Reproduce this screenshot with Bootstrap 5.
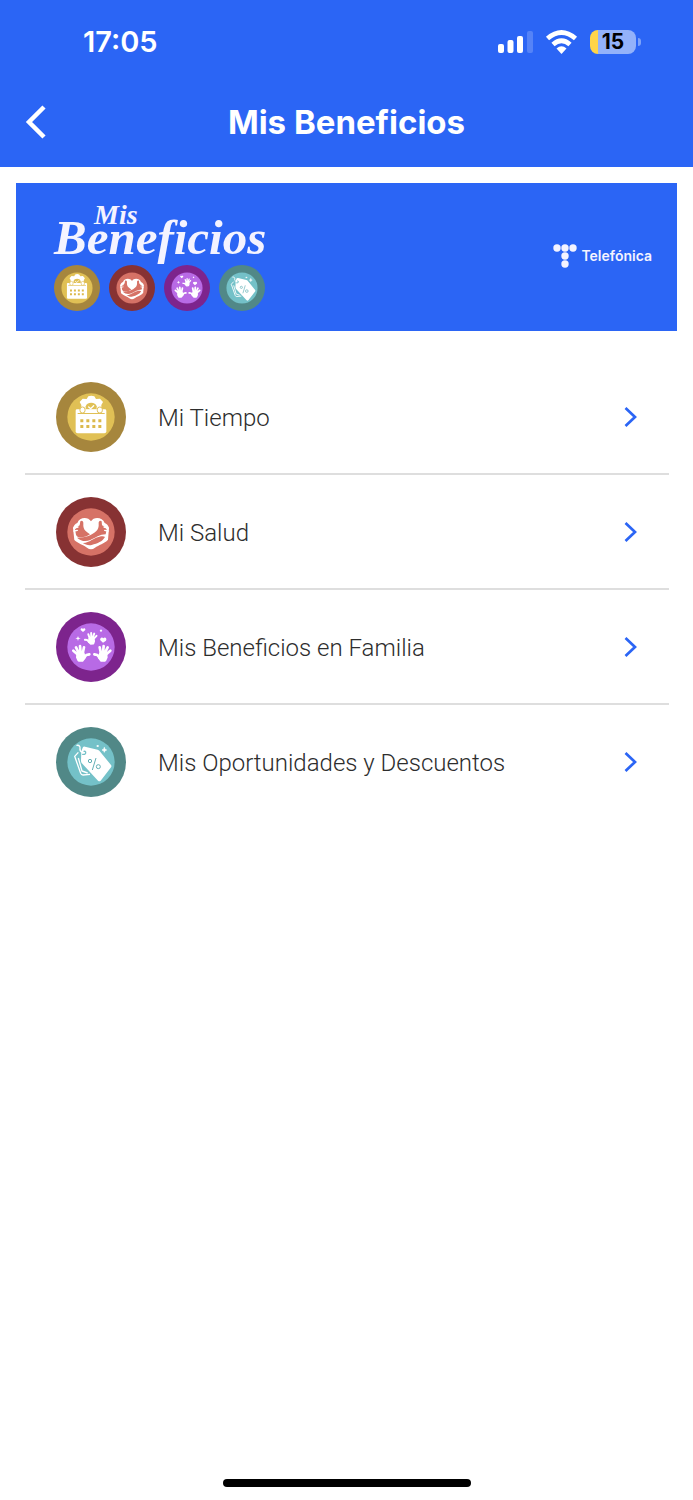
<!DOCTYPE html>
<html lang="es">
<head>
<meta charset="utf-8">
<meta name="viewport" content="width=device-width, initial-scale=1">
<title>Mis Beneficios</title>
<link href="https://cdn.jsdelivr.net/npm/bootstrap@5.3.0/dist/css/bootstrap.min.css" rel="stylesheet">
<style>
  :root { --brand: #2b65f5; }
  body { font-family: Inter, "Liberation Sans", sans-serif; }
  svg { display: block; flex: none; }
  .app-header { background: var(--brand); color: #fff; }
  .status-bar { height: 83px; padding: 0 52px 0 83px; }
  .clock { font-size: 29px; font-weight: 600; line-height: 36px; }
  .battery { width: 46px; height: 24px; border-radius: 8px; color: #000; font-size: 21px; font-weight: 700; line-height: 24px;
    background: linear-gradient(to right, #ffd549 8px, #93b2fa 8px); }
  .battery-tip { width: 3px; height: 8px; border-radius: 0 4px 4px 0; background: #7ea3f9; margin-left: 2px; }
  .title-bar { height: 84px; padding: 0 24px 7px; }
  .title-bar h1 { font-size: 33px; font-weight: 700; line-height: 40px; }
  .side-slot { width: 24px; }
  .banner { background: var(--brand); color: #f4f3ff; margin: 16px 16px 0; padding: 18px 25px 20px 38px; min-height: 148px; }
  .wordmark { font-family: "Liberation Serif", serif; font-style: italic; font-weight: 700; padding-bottom: 11px; }
  .wordmark-top { font-size: 28px; line-height: 28px; padding-left: 40px; }
  .wordmark-main { font-size: 49px; line-height: 32px; margin-top: -7px; }
  .mini-icons { gap: 9px; }
  .telefonica { font-size: 14px; font-weight: 600; line-height: 20px; gap: 4px; }
  .benefits { margin: 29px 24px 0 25px; }
  .benefit { height: 115px; padding: 0 32px 0 31px; gap: 32px; border: 0 solid #dedede; border-bottom-width: 2px;
    color: #2d2d2d; font-family: Roboto, "Open Sans", sans-serif; font-size: 24px; font-weight: 300; }
  .benefit span { padding-top: 2px; }
  .benefit:last-child { border-bottom-color: transparent; }
  .home-bar { width: 248px; height: 8px; border-radius: 4px; background: #000; margin-bottom: 13px; }
</style>
</head>
<body class="bg-white d-flex flex-column min-vh-100">

<svg width="0" height="0" class="position-absolute" aria-hidden="true">
  <symbol id="ic-tiempo" viewBox="17 15 210 210">
    <circle cx="122" cy="120" r="105" fill="#a6863d"/>
    <circle cx="122" cy="120" r="71" fill="#e0c055"/>
    <path fill="#fff" d="M93 99V84l-5-9 9-10 12 1 5-8 9-2 9 2 5 8 12-1 9 10-5 9v15z"/>
    <path fill="#e0c055" d="M106 98V88a17 14 0 0 1 33 0v10z"/>
    <path fill="none" stroke="#fff" stroke-width="4" stroke-linecap="round" d="M115 90l6 5 9-9"/>
    <path fill="#fff" d="M76 101q0-4 4-4h83q5 0 5 4v62q0 6-6 6H82q-6 0-6-6z"/>
    <path fill="#e0c055" d="M82 108h81v3H82z"/>
    <g fill="#fff" stroke="#e0c055" stroke-width="3"><rect x="89" y="90" width="15" height="18" rx="7"/><rect x="141" y="90" width="15" height="18" rx="7"/></g>
    <path fill="#dcb94b" d="M90 127h9v9h-9zM108 127h9v9h-9zM126 127h9v9h-9zM144 127h9v9h-9zM90 144h9v9h-9zM108 144h9v9h-9zM126 144h9v9h-9zM144 144h9v9h-9z"/>
  </symbol>
  <symbol id="ic-salud" viewBox="17 15 210 210">
    <circle cx="122" cy="120" r="105" fill="#873233"/>
    <circle cx="122" cy="120" r="71" fill="#d67266"/>
    <path fill="#fff" d="M122 88c-9-15-35-13-41 5-7 2-11 9-13 15l4 36c11 11 28 15 38 23 8 6 16 6 24 0 11-8 28-12 39-24l3-35c-2-8-7-13-13-15-6-18-33-20-41-5z"/>
    <path fill="#d67266" d="M90 88c5-5 10 0 9 7-1 10 2 17 7 22 4 4 9 7 13 10-10 7-22 10-36 8-3-2-5-4-6-7l-3-16 9-9 5-3z"/>
    <path fill="#d67266" d="M154 88c-5-5-10 0-9 7 1 10-2 17-7 22-13 13-32 20-58 20 13 12 27 12 40 7 15-6 29-17 46-17l3-15-8-9-6-3z"/>
    <path fill="#d67266" d="M97 153c18 2 32-16 55-20 6-1 10 0 12 2-8 14-22 19-40 24-10 3-19-2-27-6z"/>
    <path fill="none" stroke="#fff" stroke-width="4" stroke-linecap="round" d="M71 108l12-3M71 117l10-2M173 108l-12-3M173 117l-10-2"/>
  </symbol>
  <symbol id="ic-familia" viewBox="17 15 210 210">
    <circle cx="122" cy="120" r="105" fill="#7d248d"/>
    <circle cx="122" cy="120" r="71" fill="#b86ae5"/>
    <g id="hand" fill="none" stroke="#fff" stroke-width="8" stroke-linecap="round" stroke-linejoin="round">
      <path d="M83 143l-14-12M86 139l-9-18M91 138l-2-21M97 140l4-19M101 153l7-9 9-2"/>
      <path fill="#fff" d="M82 141l17-1 3 12-6 8H85l-4-9z"/>
    </g>
    <use href="#hand" transform="matrix(-1 0 0 1 249 0)"/>
    <use href="#hand" transform="matrix(-.74 .08 .08 .74 179 -16)"/>
    <path fill="#fff" d="M83 87l2 5 6 2-6 2-2 6-2-6-6-2 6-2zM98 75l-7-6c-1-5 5-7 7-3 2-4 8-2 7 3zM158 107l-8-7c-3-6 5-12 9-6 5-6 12 1 8 7zM152 67l4 4-4 4-4-4z"/>
  </symbol>
  <symbol id="ic-descuentos" viewBox="17 15 210 210">
    <circle cx="122" cy="120" r="105" fill="#518887"/>
    <circle cx="122" cy="120" r="71" fill="#74c1c8"/>
    <path fill="none" stroke="#fff" stroke-width="4" stroke-linejoin="round" d="M84 91L73 103l18 51q2 5 7 5l21-2M84 108l11 39 17 6"/>
    <path fill="#fff" d="M93 88l4-11q2-4 7-3l38 9q3 1 5 3l35 43q3 4-1 8l-30 39q-4 4-8 0L94 123q-2-3-2-7z"/>
    <path fill="none" stroke="#fff" stroke-width="4" stroke-linecap="round" d="M80 70c7-1 10 4 9 9-1 6 2 10 7 12"/>
    <path fill="none" stroke="#74c1c8" stroke-width="4" stroke-linecap="round" d="M97 97q10 2 9-7-2-3-5-2"/>
    <g fill="none" stroke="#62afb5" stroke-width="3"><circle cx="119" cy="117" r="5"/><circle cx="144" cy="134" r="6"/><path d="M137 108l-11 36"/></g>
    <path fill="#fff" stroke="#fff" stroke-width="2" d="M162 76l2 6 5 2-5 2-2 5-2-5-5-2 5-2zM142 69l3 3-3 3-3-3z"/>
  </symbol>
  <symbol id="ic-next" viewBox="0 0 13 20"><path d="M1.500 1l9.500 9-9.500 9" fill="none" stroke="#2b65f5" stroke-width="2.700"/></symbol>
</svg>

<header class="app-header">
  <div class="status-bar d-flex align-items-center justify-content-between">
    <span class="clock">17:05</span>
    <div class="d-flex align-items-center">
      <svg width="35" height="22" viewBox="0 0 35 22" fill="#fff" aria-hidden="true">
        <rect y="13" width="6" height="9" rx="2"/><rect x="9.500" y="9" width="6" height="13" rx="2"/><rect x="19" y="5" width="6" height="17" rx="2"/><rect x="29" width="6" height="22" rx="2" opacity=".2"/>
      </svg>
      <svg class="ms-2 me-2" width="41" height="24" viewBox="-5 0 41 24" aria-hidden="true">
        <path d="M1.500 8.500q14-12 28 0M7 14.500q8.500-7.500 17 0" fill="none" stroke="#fff" stroke-width="4.800"/>
        <path d="M15.500 24l-5-5.500q5-4.500 10 0z" fill="#fff"/>
      </svg>
      <span class="battery text-center">15</span><span class="battery-tip"></span>
    </div>
  </div>
  <div class="title-bar d-flex align-items-center justify-content-between">
    <button type="button" class="btn p-0 border-0" aria-label="Volver">
      <svg width="24" height="34" viewBox="0 0 24 34"><path d="M20 2L5 17l15 15" fill="none" stroke="#fff" stroke-width="4.500"/></svg>
    </button>
    <h1 class="m-0">Mis Beneficios</h1>
    <span class="side-slot"></span>
  </div>
</header>

<main class="flex-grow-1">
  <section class="banner d-flex align-items-center justify-content-between">
    <div>
      <div class="wordmark">
        <div class="wordmark-top">Mis</div>
        <div class="wordmark-main">Beneficios</div>
      </div>
      <div class="mini-icons d-flex">
        <svg width="46" height="46"><use href="#ic-tiempo"/></svg>
        <svg width="46" height="46"><use href="#ic-salud"/></svg>
        <svg width="46" height="46"><use href="#ic-familia"/></svg>
        <svg width="46" height="46"><use href="#ic-descuentos"/></svg>
      </div>
    </div>
    <div class="telefonica d-flex align-items-center">
      <svg width="24" height="24" viewBox="0 0 24 24" fill="#f4f3ff" aria-hidden="true"><circle cx="4" cy="4" r="3.700"/><circle cx="12" cy="4" r="3.700"/><circle cx="20" cy="4" r="3.700"/><circle cx="12" cy="12" r="3.700"/><circle cx="12" cy="20" r="3.700"/></svg>
      <span>Telefónica</span>
    </div>
  </section>

  <nav class="benefits d-flex flex-column">
    <a href="#tiempo" class="benefit d-flex align-items-center text-decoration-none">
      <svg width="70" height="70"><use href="#ic-tiempo"/></svg><span class="flex-grow-1">Mi Tiempo</span><svg width="13" height="20"><use href="#ic-next"/></svg>
    </a>
    <a href="#salud" class="benefit d-flex align-items-center text-decoration-none">
      <svg width="70" height="70"><use href="#ic-salud"/></svg><span class="flex-grow-1">Mi Salud</span><svg width="13" height="20"><use href="#ic-next"/></svg>
    </a>
    <a href="#familia" class="benefit d-flex align-items-center text-decoration-none">
      <svg width="70" height="70"><use href="#ic-familia"/></svg><span class="flex-grow-1">Mis Beneficios en Familia</span><svg width="13" height="20"><use href="#ic-next"/></svg>
    </a>
    <a href="#descuentos" class="benefit d-flex align-items-center text-decoration-none">
      <svg width="70" height="70"><use href="#ic-descuentos"/></svg><span class="flex-grow-1">Mis Oportunidades y Descuentos</span><svg width="13" height="20"><use href="#ic-next"/></svg>
    </a>
  </nav>
</main>

<footer class="d-flex justify-content-center"><div class="home-bar"></div></footer>
<script src="https://cdn.jsdelivr.net/npm/bootstrap@5.3.0/dist/js/bootstrap.bundle.min.js"></script>
</body>
</html>
